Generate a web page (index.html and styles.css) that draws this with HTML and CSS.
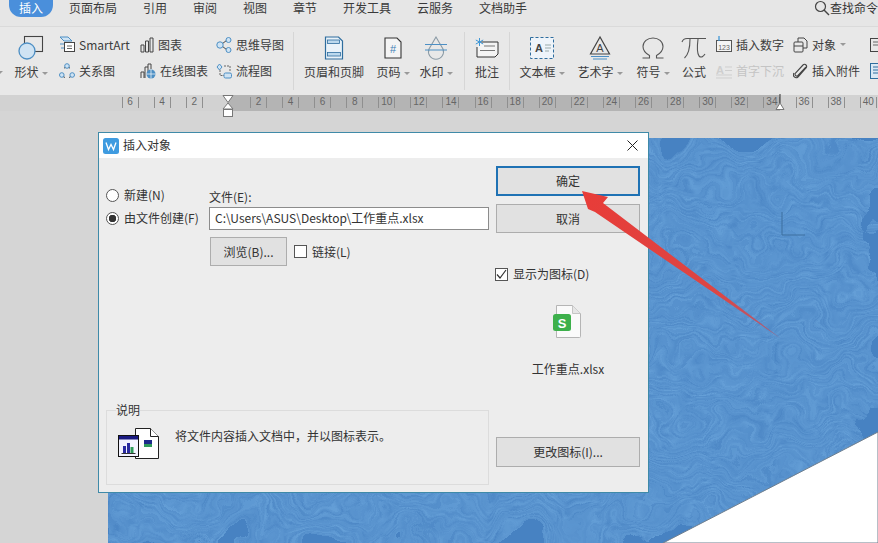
FILE: index.html
```html
<!DOCTYPE html>
<html lang="zh">
<head>
<meta charset="utf-8">
<title>插入对象</title>
<link rel="stylesheet" href="styles.css">
</head>
<body>
<div class="app">
  <nav class="tabs">
    <span class="tab active">插入</span><span class="tab">页面布局</span><span class="tab">引用</span><span class="tab">审阅</span><span class="tab">视图</span><span class="tab">章节</span><span class="tab">开发工具</span><span class="tab">云服务</span><span class="tab">文档助手</span>
    <span class="search">
      <svg class="i" width="16" height="16" viewBox="0 0 16 16"><circle cx="6.5" cy="6.5" r="5" fill="none" stroke="#444" stroke-width="1.2"/><path d="M10 10l5 5" stroke="#444" stroke-width="1.4"/></svg>
      <span>查找命令</span>
    </span>
  </nav>

  <section class="ribbon">
    <i class="caret edge"></i>
    <div class="big w-shape">
      <svg class="i" width="26" height="24" viewBox="0 0 26 24"><rect x="6.500" y=".500" width="18" height="15" fill="none" stroke="#444" stroke-width="1.100"/><circle cx="9" cy="15" r="8" fill="#cfe3f3" stroke="#4d8fc4" stroke-width="1.300"/></svg>
      <span class="lbl">形状<i class="caret"></i></span>
    </div>
    <div class="col w-c1">
      <div class="row"><svg class="i" width="16" height="17" viewBox="0 0 16 17"><path d="M1 1h8l4 4H5z" fill="#cfe3f3" stroke="#4d8fc4"/><path d="M1 8h5M2 12h3" stroke="#4d8fc4"/><rect x="5.500" y="6.500" width="10" height="9" fill="#fff" stroke="#444"/><path d="M8 10h5M8 12.500h5" stroke="#666"/></svg><span>SmartArt</span></div>
      <div class="row"><svg class="i" width="16" height="16" viewBox="0 0 16 16"><path d="M5 5a6 6 0 0 1 6 0M14 11a6 6 0 0 1-4 3.500M2 11a6 6 0 0 0 4 3.500" fill="none" stroke="#444"/><circle cx="8" cy="3" r="2.300" fill="#cfe3f3" stroke="#4d8fc4"/><circle cx="2.800" cy="12" r="2.300" fill="#cfe3f3" stroke="#4d8fc4"/><circle cx="13.200" cy="12" r="2.300" fill="#cfe3f3" stroke="#4d8fc4"/></svg><span>关系图</span></div>
    </div>
    <div class="col w-c2">
      <div class="row"><svg class="i" width="14" height="16" viewBox="0 0 14 16"><path d="M1 15V8h3v7zM5.500 15V4h3v11zM10 15V1h3v14z" fill="none" stroke="#444"/></svg><span>图表</span></div>
      <div class="row"><svg class="i" width="16" height="16" viewBox="0 0 16 16"><path d="M1 15V9h3v6M5 15V4h3v6M8 4V1h3v5" fill="none" stroke="#444"/><circle cx="11" cy="11" r="4.500" fill="#4d8fc4"/><path d="M6.500 11h9M11 6.500v9" stroke="#fff" stroke-width=".7"/></svg><span>在线图表</span></div>
    </div>
    <div class="col w-c3">
      <div class="row"><svg class="i" width="16" height="16" viewBox="0 0 16 16"><path d="M6 7L11 3M6 9l5 4" stroke="#444"/><circle cx="4" cy="8" r="3.200" fill="#cfe3f3" stroke="#4d8fc4"/><circle cx="12.500" cy="3" r="2.500" fill="#cfe3f3" stroke="#4d8fc4"/><circle cx="12.500" cy="13" r="2.500" fill="#cfe3f3" stroke="#4d8fc4"/></svg><span>思维导图</span></div>
      <div class="row"><svg class="i" width="16" height="16" viewBox="0 0 16 16"><path d="M3.500 1L6 4 3.500 7 1 4z" fill="#cfe3f3" stroke="#4d8fc4"/><rect x="8" y="10" width="7.500" height="5" rx="1.500" fill="#cfe3f3" stroke="#4d8fc4"/><path d="M4 7v5.500h4M8 3h6v5" fill="none" stroke="#666" stroke-dasharray="2 1"/></svg><span>流程图</span></div>
    </div>
    <b class="sep"></b>
    <div class="big w-header">
      <svg class="i" width="20" height="24" viewBox="0 0 20 24"><path d="M1.500 1h13l4 4v18h-17z" fill="#e9f2f9" stroke="#2e6d9e" stroke-width="1.200"/><rect x="3.500" y="4" width="12" height="3.500" fill="#bcd9ee" stroke="#2e6d9e" stroke-width=".8"/><rect x="3.500" y="16.500" width="13" height="3.500" fill="#bcd9ee" stroke="#2e6d9e" stroke-width=".8"/></svg>
      <span class="lbl">页眉和页脚</span>
    </div>
    <div class="big w-pageno">
      <svg class="i" width="18" height="22" viewBox="0 0 18 22"><path d="M1 1h12l4 4v16H1z" fill="#f4f4f4" stroke="#333" stroke-width="1.100"/><text x="9" y="16" class="hash">#</text></svg>
      <span class="lbl">页码<i class="caret"></i></span>
    </div>
    <div class="big w-water">
      <svg class="i" width="24" height="24" viewBox="0 0 24 24"><path d="M12 1L5 13a7.500 7.500 0 1 0 14 0z" fill="none" stroke="#8a9aa5" stroke-width="1.100"/><path d="M1 8.500h22M1 14h22" stroke="#4d8fc4" stroke-width="1.100"/></svg>
      <span class="lbl">水印<i class="caret"></i></span>
    </div>
    <b class="sep"></b>
    <div class="big w-note">
      <svg class="i" width="24" height="20" viewBox="0 0 24 20"><path d="M6 4h17v12l-3 3H2V9" fill="#f4f4f4" stroke="#333"/><path d="M9 8h11M5 12.500h15" stroke="#777"/><path d="M4.500 0v8M.800 2l7.400 4M8.200 2L.800 6" stroke="#3f97d6" stroke-width="1"/></svg>
      <span class="lbl">批注</span>
    </div>
    <b class="sep"></b>
    <div class="big w-textbox">
      <svg class="i" width="24" height="22" viewBox="0 0 24 22"><rect x=".500" y=".500" width="23" height="21" fill="#eef4fa" stroke="#2e6d9e" stroke-dasharray="3 2"/><text x="9" y="15" class="a">A</text><path d="M15 8h6M15 11h6M15 14h4" stroke="#9aa"/></svg>
      <span class="lbl">文本框<i class="caret"></i></span>
    </div>
    <div class="big w-art">
      <svg class="i" width="22" height="24" viewBox="0 0 22 24"><path d="M11 1L1.500 18h19z" fill="none" stroke="#444" stroke-width="1.200"/><text x="11" y="16" class="a soft">A</text><path d="M2 20.500h18M4 23h14" stroke="#4d8fc4" stroke-width="1.100"/></svg>
      <span class="lbl">艺术字<i class="caret"></i></span>
    </div>
    <div class="big w-sym">
      <svg class="i" width="24" height="22" viewBox="0 0 24 22"><path d="M1.500 21h7v-2.500C4 16 2 13 2 9.500 2 4.500 6.500 1 12 1s10 3.500 10 8.500c0 3.500-2 6.500-6.500 9V21h7" fill="none" stroke="#555" stroke-width="1.100"/></svg>
      <span class="lbl">符号<i class="caret"></i></span>
    </div>
    <div class="big w-formula">
      <svg class="i" width="26" height="22" viewBox="0 0 26 22"><path d="M1 5c1-3 3-3.500 5-3.500h19M9 2c0 8-1 15-5.500 19M17 2c-1 8-1 14 1 17 2 2 4 1 6-2" fill="none" stroke="#555" stroke-width="1.100"/></svg>
      <span class="lbl">公式</span>
    </div>
    <div class="col w-c4">
      <div class="row"><svg class="i" width="16" height="17" viewBox="0 0 16 17"><rect x=".500" y="4.500" width="15" height="11" fill="#f4f4f4" stroke="#555"/><text x="8" y="13.500" class="n">123</text><path d="M3 0v5" stroke="#3f97d6" stroke-width="1.300"/></svg><span>插入数字</span></div>
      <div class="row off"><svg class="i" width="16" height="16" viewBox="0 0 16 16"><text x="4" y="11" class="a off-a">A</text><path d="M9 4h7M9 7.500h7M0 12h16M0 15h16" stroke="#cfcfcf"/></svg><span>首字下沉</span></div>
    </div>
    <div class="col w-c5">
      <div class="row"><svg class="i" width="15" height="16" viewBox="0 0 15 16"><path d="M5 5V1h6l3 3v7h-4" fill="none" stroke="#444"/><rect x="1" y="5" width="9" height="10" rx="1" fill="none" stroke="#444"/><path d="M1 9h9" stroke="#444"/></svg><span>对象</span><i class="caret"></i></div>
      <div class="row"><svg class="i" width="15" height="16" viewBox="0 0 15 16"><path d="M13 4L5 12.500c-1.500 1.500-4-.500-2.500-2.500L10 2c2-2 5 1 3 3L5 14c-2.500 2-6-1-4-4" fill="none" stroke="#444" stroke-width="1.100"/></svg><span>插入附件</span></div>
    </div>
    <div class="col w-c6">
      <div class="row"><svg class="i" width="15" height="16" viewBox="0 0 15 16"><rect x=".500" y="1.500" width="14" height="13" fill="none" stroke="#444"/><path d="M3 5h9M3 8h9" stroke="#666"/></svg></div>
      <div class="row"><svg class="i" width="15" height="16" viewBox="0 0 15 16"><rect x=".500" y=".500" width="14" height="15" fill="#d9e8f4" stroke="#2e6d9e"/><path d="M3 4h9M3 7h9M3 10h9" stroke="#2e6d9e"/></svg></div>
    </div>
  </section>

  <main class="stage">
    <div class="ruler">
      <span class="cell"><s>6</s></span><span class="cell"><s>4</s></span><span class="cell"><s>2</s></span><span class="cell"><s class="zero"></s></span><span class="cell"><s>2</s></span><span class="cell"><s>4</s></span><span class="cell"><s>6</s></span><span class="cell"><s>8</s></span><span class="cell"><s>10</s></span><span class="cell"><s>12</s></span><span class="cell"><s>14</s></span><span class="cell"><s>16</s></span><span class="cell"><s>18</s></span><span class="cell"><s>20</s></span><span class="cell"><s>22</s></span><span class="cell"><s>24</s></span><span class="cell"><s>26</s></span><span class="cell"><s>28</s></span><span class="cell"><s>30</s></span><span class="cell"><s>32</s></span><span class="cell"><s>34</s></span><span class="cell"><s>36</s></span><span class="cell"><s>38</s></span><span class="cell"><s>40</s></span>
      <svg class="marker-l" width="12" height="22" viewBox="0 0 12 22"><path d="M1 .500h10L6 7.500zM6 8l5 6H1z" fill="#fff" stroke="#777"/><rect x="1.500" y="14.500" width="9" height="7" fill="#fff" stroke="#777"/></svg>
      <svg class="marker-r" width="10" height="17" viewBox="0 0 10 17"><path d="M5 0v9" stroke="#333"/><path d="M5 9l4 6.500H1z" fill="#fff" stroke="#777"/></svg>
    </div>
    <div class="doc">
      <svg class="paper" width="770" height="405" viewBox="0 0 770 405" preserveAspectRatio="none">
        <defs>
          <filter id="swirl" x="0" y="0" width="100%" height="100%" color-interpolation-filters="sRGB">
            <feTurbulence type="fractalNoise" baseFrequency="0.05 0.35" numOctaves="2" seed="4" result="fine"/>
            <feTurbulence type="fractalNoise" baseFrequency="0.018" numOctaves="3" seed="9" result="warp"/>
            <feDisplacementMap in="fine" in2="warp" scale="90" xChannelSelector="R" yChannelSelector="G" result="wavy"/>
            <feColorMatrix in="wavy" type="matrix" values="0.22 0 0 0 0.245  0.22 0 0 0 0.475  0.16 0 0 0 0.735  0 0 0 0 1"/>
            <feGaussianBlur stdDeviation="0.5"/>
          </filter>
        </defs>
        <rect width="770" height="405" fill="#5791cd"/>
        <rect class="grain" width="770" height="405" filter="url(#swirl)"/>
        <path d="M674 74V97H697" fill="none" stroke="#3d6f9f"/>
        <path d="M770 294L555 405H770z" fill="#fff" stroke="#6f7f8f"/>
      </svg>
    </div>
  </main>

  <div class="dialog">
    <header class="titlebar">
      <svg class="logo" width="16" height="16" viewBox="0 0 16 16"><rect width="16" height="16" rx="2.500" fill="#3f9be0"/><path d="M3 4.500l2.500 7L8 6.500l2.500 5 2.500-7" fill="none" stroke="#fff" stroke-width="1.300"/></svg>
      <span class="title">插入对象</span>
      <svg class="close" width="11" height="11" viewBox="0 0 11 11"><path d="M.500.500l10 10M10.500.500l-10 10" stroke="#222" stroke-width="1"/></svg>
    </header>
    <div class="body">
      <div class="left">
        <div class="top">
          <div class="radios">
            <label class="opt"><i class="radio"></i>新建(N)</label>
            <label class="opt"><i class="radio on"></i>由文件创建(F)</label>
          </div>
          <div class="form">
            <div class="flabel">文件(E):</div>
            <div class="input">C:\Users\ASUS\Desktop\工作重点.xlsx</div>
            <div class="browse-row">
              <span class="btn browse">浏览(B)...</span>
              <label class="check"><i class="box"></i>链接(L)</label>
            </div>
          </div>
        </div>
        <fieldset class="desc">
          <legend>说明</legend>
          <svg class="desc-ico" width="41" height="32" viewBox="0 0 41 32"><path d="M17.500.500h15l8 8v22h-23z" fill="#fff" stroke="#222"/><path d="M32.500.500v8h8" fill="#fff" stroke="#222"/><rect x="26" y="12" width="8" height="4" fill="#1d2a8a"/><rect x="26" y="16" width="8" height="3" fill="#2f9a5a"/><rect x=".500" y="7.500" width="20" height="21" fill="#f3f3ff" stroke="#111"/><rect x="1" y="8" width="19" height="3.500" fill="#1a1a80"/><path d="M5 25v-7h3v7zM9 25v-10h3v10z" fill="#2a2aa0"/><path d="M12.500 25v-6h3v6z" fill="#2f9a5a"/><path d="M3.500 25.500h14" stroke="#333"/></svg>
          <p class="desc-text">将文件内容插入文档中，并以图标表示。</p>
        </fieldset>
      </div>
      <aside class="right">
        <span class="btn ok">确定</span>
        <span class="btn cancel">取消</span>
        <label class="check show"><i class="box"><svg width="11" height="11" viewBox="0 0 11 11"><path d="M1 5.500l3 3.500 6-8" fill="none" stroke="#333" stroke-width="1.200"/></svg></i>显示为图标(D)</label>
        <svg class="file-ico" width="28" height="33" viewBox="0 0 28 33"><path d="M3.500.500h16l8 8v23a1 1 0 0 1-1 1h-23z" fill="#fafafa" stroke="#b5b5b5"/><path d="M19.500.500v8h8" fill="#e6e6e6" stroke="#c5c5c5"/><rect x="0" y="9" width="18" height="17" rx="2.500" fill="#3db04b"/><text x="9" y="22.500" class="s">S</text></svg>
        <div class="fname">工作重点.xlsx</div>
        <span class="btn change">更改图标(I)...</span>
      </aside>
    </div>
  </div>

  <svg class="arrow" width="878" height="543" viewBox="0 0 878 543">
    <defs>
      <linearGradient id="ar" x1="582" y1="191" x2="780" y2="338" gradientUnits="userSpaceOnUse">
        <stop offset="0" stop-color="#e83c38"/><stop offset=".7" stop-color="#dc4644"/><stop offset="1" stop-color="#a2607f"/>
      </linearGradient>
    </defs>
    <path d="M582 191L608 197 603 203 780 338 595 212 588 209z" fill="url(#ar)"/>
  </svg>
</div>
</body>
</html>
```

FILE: styles.css
```css
* { box-sizing: border-box; }
html, body { margin: 0; padding: 0; }
body {
  width: 878px;
  height: 543px;
  overflow: hidden;
  background: #d5d5d5;
  color: #333;
  font: 12px/16px "Noto Sans CJK SC", "Noto Sans", sans-serif;
}
.app { position: relative; width: 878px; height: 543px; overflow: hidden; display: flex; flex-direction: column; }
.i { display: block; flex: none; }

/* tabs */
.tabs {
  flex: none;
  height: 27px;
  display: flex;
  align-items: flex-start;
  gap: 26px;
  padding-left: 9px;
  background: #e6e6e6;
  border-bottom: 1px solid #dadada;
}
.tab { height: 17px; line-height: 16px; white-space: nowrap; color: #3a3a3a; }
.tab.active {
  width: 44px;
  margin-right: -10px;
  text-align: center;
  background: #4a8fdb;
  color: #fff;
  border-radius: 0 0 12px 12px;
}
.search { margin-left: auto; display: flex; white-space: nowrap; }

/* ribbon */
.ribbon {
  flex: none;
  height: 68px;
  display: flex;
  background: #e8e8e8;
  overflow: hidden;
  color: #3c3c3c;
}
.big { flex: none; display: flex; flex-direction: column; align-items: center; padding-top: 9px; height: 68px; }
.big .i { height: 24px; margin-bottom: 3px; overflow: visible; }
.big .lbl { white-space: nowrap; line-height: 18px; }
.col { flex: none; display: flex; flex-direction: column; gap: 9px; padding-top: 9px; }
.row { height: 17px; display: flex; align-items: center; gap: 4px; white-space: nowrap; }
.row.off { color: #c4c4c4; }
.sep { flex: none; width: 1px; height: 58px; margin-top: 5px; background: #d6d6d6; }
.caret {
  display: inline-block;
  flex: none;
  width: 0; height: 0;
  margin-left: 3px;
  vertical-align: middle;
  border: 3px solid transparent;
  border-top: 3px solid #999;
  border-bottom: 0;
}
.row .caret { margin-left: 0; }
.caret.edge { margin: 44px 0 0 -3px; }
.w-shape { width: 40px; margin-left: 8px; }
.w-c1 { width: 81px; margin-left: 8px; }
.w-c2 { width: 76px; }
.w-c3 { width: 77px; }
.w-header { width: 80px; }
.w-pageno { width: 38px; }
.w-water { width: 48px; margin-right: 4px; }
.w-note { width: 44px; }
.w-textbox { width: 64px; }
.w-art { width: 52px; }
.w-sym { width: 54px; }
.w-formula { width: 28px; }
.w-c4 { width: 77px; margin-left: 8px; }
.w-c5 { width: 77px; }
.w-c6 { width: 20px; }
.hash { font: 11px "Liberation Sans", sans-serif; fill: #3f7fb5; text-anchor: middle; }
.a { font: 700 11px "Liberation Sans", sans-serif; fill: #444; text-anchor: middle; }
.a.soft { font-weight: 400; }
.off-a { fill: #cfcfcf; }
.n { font: 7px "Liberation Sans", sans-serif; fill: #666; text-anchor: middle; }
.s { font: 700 13px "Liberation Sans", sans-serif; fill: #fff; text-anchor: middle; }

/* ruler and page */
.stage { flex: 1; min-height: 0; background: #d5d5d5; }
.ruler {
  position: relative;
  height: 16px;
  display: flex;
  padding-left: 114px;
  background: linear-gradient(90deg, #d2d2d2 0, #d2d2d2 228px, #b4b4b4 228px, #b4b4b4 780px, #d2d2d2 780px);
}
.cell { flex: none; width: 32.1px; display: flex; justify-content: center; }
.cell s {
  width: 17px;
  height: 11px;
  margin-top: 2px;
  border-left: 1px solid #8f8f8f;
  border-right: 1px solid #8f8f8f;
  font-size: 10px;
  line-height: 10px;
  text-align: center;
  text-decoration: none;
  color: #666;
  font-family: "Liberation Sans", sans-serif;
}
.cell s.zero { border: 0; }
.marker-l { position: absolute; left: 222px; top: 0; }
.marker-r { position: absolute; left: 775px; top: -1px; }
.doc { margin: 27px 0 0 108px; height: 405px; }
.paper { display: block; }
.grain { opacity: .6; }

/* dialog */
.dialog {
  position: absolute;
  left: 98px;
  top: 132px;
  width: 551px;
  height: 361px;
  display: flex;
  flex-direction: column;
  background: #ededed;
  border: 1px solid #3f8aa8;
}
.titlebar {
  flex: none;
  height: 25px;
  display: flex;
  align-items: center;
  padding: 0 10px 0 4px;
  background: #fff;
  color: #333;
}
.logo { flex: none; }
.title { margin: -1px 0 0 4px; }
.close { margin-left: auto; }
.body { flex: 1; display: flex; min-height: 0; }
.left { width: 397px; padding-left: 7px; display: flex; flex-direction: column; }
.top { display: flex; }
.radios { width: 103px; padding-top: 29px; display: flex; flex-direction: column; gap: 7px; }
.opt { display: flex; align-items: center; height: 16px; white-space: nowrap; }
.radio {
  flex: none;
  width: 13px; height: 13px;
  margin-right: 5px;
  border: 1px solid #555;
  border-radius: 50%;
  background: #fff;
}
.radio.on { background: radial-gradient(circle, #333 0 3.500px, #fff 4px); }
.form { width: 280px; padding-top: 31px; }
.flabel { height: 18px; line-height: 16px; }
.input {
  height: 23px;
  padding-left: 5px;
  line-height: 20px;
  background: #fff;
  border: 1px solid #8c8c8c;
  white-space: nowrap;
  color: #333;
}
.browse-row { display: flex; align-items: center; margin-top: 7px; margin-left: 1px; }
.btn {
  display: flex;
  align-items: center;
  justify-content: center;
  background: #e1e1e1;
  border: 1px solid #adadad;
  color: #333;
}
.browse { width: 77px; height: 29px; }
.check { display: flex; align-items: center; white-space: nowrap; }
.box {
  flex: none;
  width: 13px; height: 13px;
  margin-right: 5px;
  background: #fff;
  border: 1px solid #555;
  display: flex;
  align-items: center;
  justify-content: center;
}
.browse-row .check { margin-left: 7px; }
.desc {
  position: relative;
  width: 383px;
  height: 82px;
  margin: auto 0 7px;
  padding: 0;
  border: 1px solid #dcdcdc;
  display: block;
}
.desc legend { padding: 0; margin-left: 9px; line-height: 14px; font-size: 12px; }
.desc-ico { position: absolute; left: 11px; top: 11px; }
.desc-text { margin: 11px 0 0 68px; line-height: 16px; }
.right { width: 144px; display: flex; flex-direction: column; padding-bottom: 25px; }
.ok { flex: none; height: 30px; margin-top: 8px; border: 2px solid #1f72b4; }
.cancel { flex: none; height: 29px; margin-top: 8px; }
.show { margin: 33px 0 0 -1px; height: 16px; }
.file-ico { display: block; margin: 23px 0 0 57px; }
.fname { margin-top: 23px; text-align: center; }
.change { flex: none; height: 30px; margin-top: auto; }

/* annotation arrow */
.arrow { position: absolute; left: 0; top: 0; pointer-events: none; }
```
